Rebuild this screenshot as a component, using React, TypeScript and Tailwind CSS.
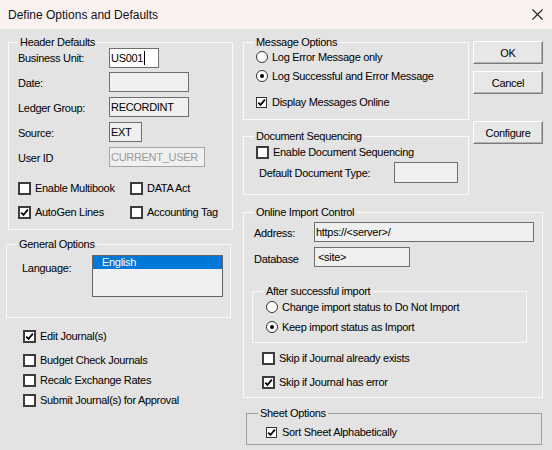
import React from "react";

function CheckMark() {
  return (
    <svg width="9" height="9" viewBox="0 0 9 9" className="block">
      <path d="M1.2 4.6 L3.5 6.9 L7.9 1.6" fill="none" stroke="#000" strokeWidth="1.7" />
    </svg>
  );
}

function Check({ checked, thin, label }: { checked?: boolean; thin?: boolean; label: string }) {
  return (
    <div className="flex items-center h-[16px] whitespace-nowrap">
      {thin ? (
        <span className="w-[11px] h-[11px] border border-[#333] bg-white flex items-center justify-center shrink-0">
          {checked && <CheckMark />}
        </span>
      ) : (
        <span className="w-[13px] h-[13px] border-2 border-[#3c3c3c] bg-white flex items-center justify-center shrink-0">
          {checked && <CheckMark />}
        </span>
      )}
      <span className={thin ? "ml-[5px]" : "ml-[4px]"}>{label}</span>
    </div>
  );
}

function Radio({ checked, label }: { checked?: boolean; label: string }) {
  return (
    <div className="flex items-center h-[16px] whitespace-nowrap">
      <span className="w-[12px] h-[12px] rounded-full border-[1.5px] border-[#333] bg-white flex items-center justify-center shrink-0">
        {checked && <span className="w-[4px] h-[4px] rounded-full bg-black" />}
      </span>
      <span className="ml-[4px]">{label}</span>
    </div>
  );
}

function Field({ value, w, white, disabled, caret }: { value?: string; w: string; white?: boolean; disabled?: boolean; caret?: boolean }) {
  return (
    <div
      className={`${w} h-[20px] border border-[#6e6e6e] flex items-center pl-[1px] whitespace-nowrap overflow-hidden ${
        white ? "bg-white" : "bg-[#f0f0f0]"
      } ${disabled ? "text-[#9a9a9a] border-[#a6a6a6]" : "text-black"}`}
    >
      <span>{value}</span>
      {caret && <span className="ml-[1px] w-[1px] h-[14px] bg-black" />}
    </div>
  );
}

function Button({ label, className }: { label: string; className: string }) {
  return (
    <div
      className={`${className} w-[70px] h-[23px] flex items-center justify-center bg-[#e7e7e7] border border-t-white border-l-white border-r-[#7a7a7a] border-b-[#7a7a7a] shadow-[inset_-1px_-1px_0_#b4b4b4]`}
    >
      {label}
    </div>
  );
}

export default function App() {
  return (
    <div className="w-[552px] h-[450px] bg-[#e3e3e3] text-black font-['Liberation_Sans',Arial,sans-serif] text-[11px] tracking-[-0.3px] leading-[14px] overflow-hidden select-none">
      {/* Title bar */}
      <div className="h-[29px] bg-[#faf2f1] flex items-center justify-between pl-[8px] pr-[9px] text-[12px] tracking-normal text-[#111]">
        <span>Define Options and Defaults</span>
        <svg width="11" height="11" viewBox="0 0 11 11">
          <path d="M0.5 0.5 L10.5 10.5 M10.5 0.5 L0.5 10.5" stroke="#222" strokeWidth="1.1" />
        </svg>
      </div>

      <div className="flex">
        {/* Left column */}
        <div className="ml-[8px] w-[225px] flex flex-col">
          <fieldset className="mt-[7px] w-[225px] border border-[#f9f9f9] pb-[9px]">
            <legend className="ml-[9px] px-[2px] leading-[12px]">Header Defaults</legend>
            <div className="pl-[9px]">
              <div className="flex items-center h-[20px]">
                <span className="w-[91px]">Business Unit:</span>
                <Field value="US001" w="w-[50px]" white caret />
              </div>
              <div className="flex items-center h-[20px] mt-[4px]">
                <span className="w-[91px] pt-[2px]">Date:</span>
                <Field w="w-[80px]" />
              </div>
              <div className="flex items-center h-[20px] mt-[5px]">
                <span className="w-[91px] pt-[1px]">Ledger Group:</span>
                <Field value="RECORDINT" w="w-[80px]" />
              </div>
              <div className="flex items-center h-[20px] mt-[5px]">
                <span className="w-[91px] pt-[1px]">Source:</span>
                <Field value="EXT" w="w-[33px]" />
              </div>
              <div className="flex items-center h-[20px] mt-[5px]">
                <span className="w-[91px] pt-[1px]">User ID</span>
                <Field value="CURRENT_USER" w="w-[96px]" disabled />
              </div>
              <div className="flex mt-[13px]">
                <div className="w-[112px]">
                  <Check label="Enable Multibook" />
                </div>
                <Check label="DATA Act" />
              </div>
              <div className="flex mt-[8px]">
                <div className="w-[112px]">
                  <Check checked label="AutoGen Lines" />
                </div>
                <Check label="Accounting Tag" />
              </div>
            </div>
          </fieldset>

          <fieldset className="mt-[8px] ml-[-2px] w-[225px] border border-[#f9f9f9] pb-[20px]">
            <legend className="ml-[10px] px-[2px] leading-[12px]">General Options</legend>
            <div className="flex items-start mt-[5px] pl-[15px]">
              <span className="w-[70px] mt-[6px]">Language:</span>
              <div className="w-[131px] h-[42px] border border-[#646464] bg-[#f0f0f0]">
                <div className="h-[13px] bg-[#0078d7] text-white pl-[9px] leading-[13px]">English</div>
              </div>
            </div>
          </fieldset>

          <div className="ml-[15px] mt-[10px]">
            <Check checked label="Edit Journal(s)" />
          </div>
          <div className="ml-[15px] mt-[8px]">
            <Check label="Budget Check Journals" />
          </div>
          <div className="ml-[15px] mt-[4px]">
            <Check label="Recalc Exchange Rates" />
          </div>
          <div className="ml-[15px] mt-[4px]">
            <Check label="Submit Journal(s) for Approval" />
          </div>
        </div>

        {/* Right column */}
        <div className="ml-[10px] w-[300px] flex flex-col">
          <div className="flex">
            <div className="w-[226px] flex flex-col">
              <fieldset className="mt-[7px] w-[226px] border border-[#f9f9f9] pb-[9px]">
                <legend className="ml-[10px] px-[2px] leading-[12px]">Message Options</legend>
                <div className="pl-[12px]">
                  <div className="mt-[1px]">
                    <Radio label="Log Error Message only" />
                  </div>
                  <div className="mt-[3px]">
                    <Radio checked label="Log Successful and Error Message" />
                  </div>
                  <div className="mt-[10px]">
                    <Check checked thin label="Display Messages Online" />
                  </div>
                </div>
              </fieldset>

              <fieldset className="mt-[10px] w-[226px] border border-[#f9f9f9] pb-[11px]">
                <legend className="ml-[10px] px-[2px] leading-[12px]">Document Sequencing</legend>
                <div className="pl-[12px]">
                  <div className="mt-[2px]">
                    <Check label="Enable Document Sequencing" />
                  </div>
                  <div className="flex items-center mt-[2px] ml-[3px] h-[21px]">
                    <span className="w-[135px]">Default Document Type:</span>
                    <div className="w-[64px] h-[21px] border border-[#6e6e6e] bg-[#f0f0f0]" />
                  </div>
                </div>
              </fieldset>
            </div>

            <div className="ml-[4px] w-[70px] flex flex-col">
              <Button label="OK" className="mt-[12px]" />
              <Button label="Cancel" className="mt-[7px]" />
              <Button label="Configure" className="mt-[27px]" />
            </div>
          </div>

          <fieldset className="mt-[11px] w-[300px] border border-[#f9f9f9] pb-[7px]">
            <legend className="ml-[10px] px-[2px] leading-[12px]">Online Import Control</legend>
            <div className="flex items-center mt-[4px] pl-[10px] h-[20px]">
              <span className="w-[60px] pt-[2px]">Address:</span>
              <Field value="https://<server>/" w="w-[220px]" />
            </div>
            <div className="flex items-center mt-[5px] pl-[10px] h-[20px]">
              <span className="w-[60px] pt-[4px]">Database</span>
              <div className="w-[96px] h-[20px] border border-[#6e6e6e] bg-[#f0f0f0] flex items-center pl-[3px]">&lt;site&gt;</div>
            </div>

            <fieldset className="mt-[18px] ml-[8px] w-[275px] border border-[#f9f9f9] pb-[7px]">
              <legend className="ml-[11px] px-[2px] leading-[12px]">After successful import</legend>
              <div className="pl-[13px]">
                <div className="mt-[2px]">
                  <Radio label="Change import status to Do Not Import" />
                </div>
                <div className="mt-[4px]">
                  <Radio checked label="Keep import status as Import" />
                </div>
              </div>
            </fieldset>

            <div className="mt-[7px] ml-[18px]">
              <Check label="Skip if Journal already exists" />
            </div>
            <div className="mt-[8px] ml-[18px]">
              <Check checked label="Skip if Journal has error" />
            </div>
          </fieldset>

          <fieldset className="mt-[9px] ml-[3px] w-[296px] border border-[#a0a0a0] pb-[4px]">
            <legend className="ml-[11px] px-[2px] leading-[12px]">Sheet Options</legend>
            <div className="mt-[5px] pl-[19px]">
              <Check checked thin label="Sort Sheet Alphabetically" />
            </div>
          </fieldset>
        </div>
      </div>
    </div>
  );
}
